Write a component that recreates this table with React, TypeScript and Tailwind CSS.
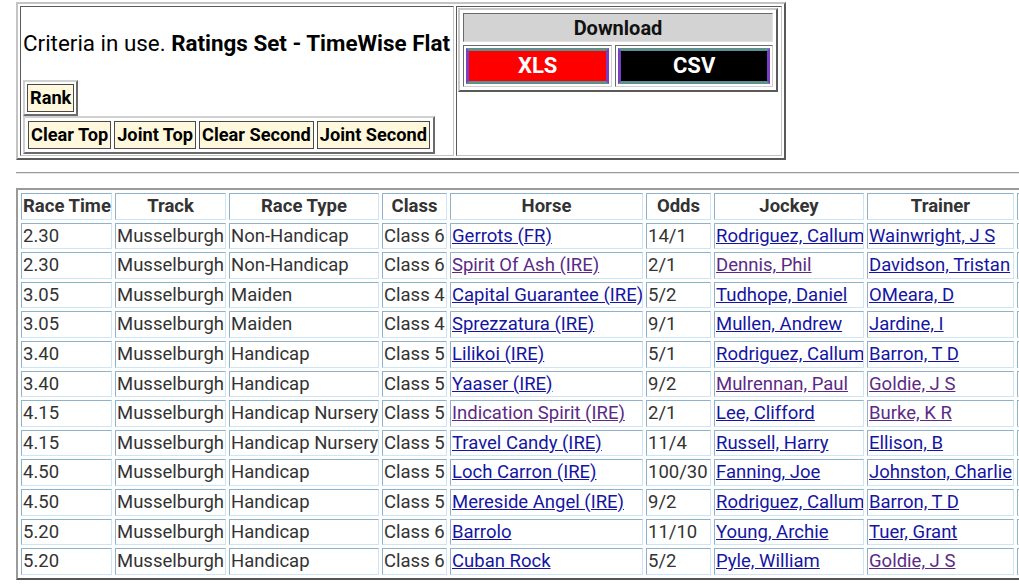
import React from 'react';

type Cell = { t: string; link?: boolean; visited?: boolean };

const cols = [
  { name: 'Race Time', w: 'w-[91px]' },
  { name: 'Track', w: 'w-[111px]' },
  { name: 'Race Type', w: 'w-[150px]' },
  { name: 'Class', w: 'w-[65px]' },
  { name: 'Horse', w: 'w-[193px]' },
  { name: 'Odds', w: 'w-[65px]' },
  { name: 'Jockey', w: 'w-[150px]' },
  { name: 'Trainer', w: 'w-[147px]' },
  { name: '', w: 'w-[100px]' },
];

// [time, type, class, horse, odds, jockey, trainer] - * marks a visited link
const raw: string[][] = [
  ['2.30', 'Non-Handicap', 'Class 6', 'Gerrots (FR)', '14/1', 'Rodriguez, Callum', 'Wainwright, J S'],
  ['2.30', 'Non-Handicap', 'Class 6', '*Spirit Of Ash (IRE)', '2/1', '*Dennis, Phil', 'Davidson, Tristan'],
  ['3.05', 'Maiden', 'Class 4', 'Capital Guarantee (IRE)', '5/2', 'Tudhope, Daniel', 'OMeara, D'],
  ['3.05', 'Maiden', 'Class 4', 'Sprezzatura (IRE)', '9/1', 'Mullen, Andrew', 'Jardine, I'],
  ['3.40', 'Handicap', 'Class 5', 'Lilikoi (IRE)', '5/1', 'Rodriguez, Callum', 'Barron, T D'],
  ['3.40', 'Handicap', 'Class 5', 'Yaaser (IRE)', '9/2', '*Mulrennan, Paul', '*Goldie, J S'],
  ['4.15', 'Handicap Nursery', 'Class 5', '*Indication Spirit (IRE)', '2/1', 'Lee, Clifford', '*Burke, K R'],
  ['4.15', 'Handicap Nursery', 'Class 5', 'Travel Candy (IRE)', '11/4', 'Russell, Harry', 'Ellison, B'],
  ['4.50', 'Handicap', 'Class 5', 'Loch Carron (IRE)', '100/30', 'Fanning, Joe', 'Johnston, Charlie'],
  ['4.50', 'Handicap', 'Class 5', 'Mereside Angel (IRE)', '9/2', 'Rodriguez, Callum', 'Barron, T D'],
  ['5.20', 'Handicap', 'Class 6', 'Barrolo', '11/10', 'Young, Archie', 'Tuer, Grant'],
  ['5.20', 'Handicap', 'Class 6', 'Cuban Rock', '5/2', 'Pyle, William', '*Goldie, J S'],
];

const lnk = (s: string): Cell =>
  s.startsWith('*') ? { t: s.slice(1), link: true, visited: true } : { t: s, link: true };

const rows: Cell[][] = raw.map((r) => [
  { t: r[0] },
  { t: 'Musselburgh' },
  { t: r[1] },
  { t: r[2] },
  lnk(r[3]),
  { t: r[4] },
  lnk(r[5]),
  lnk(r[6]),
  { t: '' },
]);

const cellBorder =
  'border border-t-[#8fb2c9] border-l-[#8fb2c9] border-b-[#cfe5f3] border-r-[#cfe5f3]';

const RankButton = ({ label }: { label: string }) => (
  <td className="p-0">
    <div className="bg-[#fff8dc] border border-[#4a4a4a] px-[2px] py-[2px] leading-[22px] text-[18.2px] font-bold text-black whitespace-nowrap">
      {label}
    </div>
  </td>
);

export default function App() {
  return (
    <div className="w-screen h-screen overflow-hidden bg-white" style={{ fontFamily: 'Roboto, "Noto Sans", sans-serif' }}>
      <div className="w-[1200px] pt-[2px] pl-[16px]">
        {/* criteria + download */}
        <table className="border-separate border-spacing-[2px] border-2 border-t-[#c4c4c4] border-l-[#c4c4c4] border-b-[#5a5a5a] border-r-[#5a5a5a]">
          <tbody>
            <tr>
              <td className="w-[434px] h-[150px] align-top border border-t-[#5a5a5a] border-l-[#5a5a5a] border-b-[#c4c4c4] border-r-[#c4c4c4] pl-[2px] pt-[23px]">
                <div className="text-[22.4px] leading-[26px] text-black whitespace-nowrap">
                  Criteria in use. <b>Ratings Set - TimeWise Flat</b>
                </div>
                <table className="mt-[24px] border-separate border-spacing-[2px] border-2 border-t-[#d0d0d0] border-l-[#d0d0d0] border-b-[#6a6a6a] border-r-[#6a6a6a]">
                  <tbody>
                    <tr>
                      <RankButton label="Rank" />
                    </tr>
                  </tbody>
                </table>
                <table className="border-separate border-spacing-[3px] border-2 border-t-[#d0d0d0] border-l-[#d0d0d0] border-b-[#6a6a6a] border-r-[#6a6a6a]">
                  <tbody>
                    <tr>
                      <RankButton label="Clear Top" />
                      <RankButton label="Joint Top" />
                      <RankButton label="Clear Second" />
                      <RankButton label="Joint Second" />
                    </tr>
                  </tbody>
                </table>
              </td>
              <td className="w-[326px] h-[150px] align-top border border-t-[#5a5a5a] border-l-[#5a5a5a] border-b-[#c4c4c4] border-r-[#c4c4c4] pl-[1px] pt-[1px]">
                <table className="w-[320px] border-separate border-spacing-[3px] border-2 border-t-[#c8c8c8] border-l-[#c8c8c8] border-b-[#5a5a5a] border-r-[#5a5a5a]">
                  <tbody>
                    <tr>
                      <th
                        colSpan={2}
                        className="h-[29px] bg-[#d3d3d3] border border-t-[#6a6a6a] border-l-[#6a6a6a] border-b-[#e0e0e0] border-r-[#e0e0e0] text-[20px] leading-[24px] font-bold text-[#111] text-center"
                      >
                        Download
                      </th>
                    </tr>
                    <tr>
                      <td className="p-[2px] border border-t-[#6a6a6a] border-l-[#6a6a6a] border-b-[#d0d0d0] border-r-[#d0d0d0]">
                        <div className="h-[36px] bg-[#ff0000] border-[3px] border-y-[#5f9090] border-x-[#7b3dc4] text-white text-[22px] font-bold leading-[30px] text-center">
                          XLS
                        </div>
                      </td>
                      <td className="p-[2px] border border-t-[#6a6a6a] border-l-[#6a6a6a] border-b-[#d0d0d0] border-r-[#d0d0d0]">
                        <div className="h-[36px] bg-black border-[3px] border-y-[#5f9090] border-x-[#7b3dc4] text-white text-[22px] font-bold leading-[30px] text-center">
                          CSV
                        </div>
                      </td>
                    </tr>
                  </tbody>
                </table>
              </td>
            </tr>
          </tbody>
        </table>

        <div className="mt-[12px] h-[2px] border-t border-t-[#9a9a9a] border-b border-b-[#e6e6e6]" />

        {/* results */}
        <table className="mt-[14px] w-[1106px] table-fixed border-separate border-spacing-[3px] border-2 border-t-[#9a9a9a] border-l-[#9a9a9a] border-b-[#555] border-r-[#555] text-[#333]">
          <thead>
            <tr>
              {cols.map((c, i) => (
                <th
                  key={i}
                  className={`${c.w} ${cellBorder} px-[1px] py-[1px] text-[18.5px] leading-[22.6px] font-bold text-center whitespace-nowrap overflow-hidden`}
                >
                  {c.name || '\u00a0'}
                </th>
              ))}
            </tr>
          </thead>
          <tbody>
            {rows.map((r, i) => (
              <tr key={i}>
                {r.map((c, j) => (
                  <td
                    key={j}
                    className={`${cellBorder} px-[1px] py-[1px] text-[18.5px] leading-[22.6px] text-left whitespace-nowrap overflow-hidden`}
                  >
                    {c.link ? (
                      <a href="#" className={`underline ${c.visited ? 'text-[#5b2a86]' : 'text-[#1515a3]'}`}>
                        {c.t}
                      </a>
                    ) : (
                      c.t || '\u00a0'
                    )}
                  </td>
                ))}
              </tr>
            ))}
          </tbody>
        </table>
      </div>
    </div>
  );
}
